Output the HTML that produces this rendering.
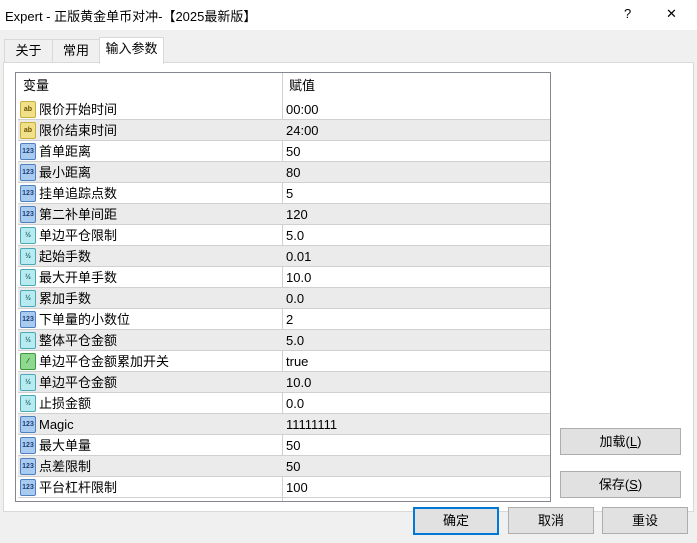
<!DOCTYPE html><html><head><meta charset="utf-8"><style>
body{margin:0;width:697px;height:543px;background:#f0f0f0;font-family:"Liberation Sans","Noto Sans CJK SC",sans-serif;font-size:13px;color:#000;position:relative;overflow:hidden}
.title{position:absolute;left:0;top:0;width:697px;height:30px;background:#fff}
.title span{position:absolute;left:5px;top:6px;font-size:13px}
.tb{position:absolute;top:4px;font-size:15px}
.tab{position:absolute;top:39px;height:23px;border:1px solid #d9d9d9;border-bottom:none;background:#f0f0f0;line-height:22px;text-align:center}
.panel{position:absolute;left:3px;top:62px;width:689px;height:448px;background:#fff;border:1px solid #d9d9d9}
.table{position:absolute;left:15px;top:72px;width:534px;height:428px;border:1px solid #828790;background:#fff;overflow:hidden}
.row{position:absolute;left:2px;width:532px;height:20px;border-bottom:1px solid #d0d0d0;line-height:21px}
.row.g{background:#ebebeb}
.c1{position:absolute;left:21px}
.c2{position:absolute;left:268px}
.ic{position:absolute;left:2px;top:2px;border-radius:2px;font-size:7px;line-height:15px;text-align:center;font-weight:bold;font-style:normal}
.ab{background:#f1e08a;border:1px solid #c8ae3c;color:#6a5000;width:14px;height:15px}
.n{background:#a9cbf0;border:1px solid #4f80bf;color:#1d3f7a;width:14px;height:15px}
.f{background:#b8ebf0;border:1px solid #4aa9b8;color:#1b6672;width:14px;height:15px}
.b{background:#8fd88f;border:1px solid #3c9a3c;color:#0a5a0a;width:14px;height:15px}
.vl{position:absolute;left:266px;top:0;width:1px;height:428px;background:#d0d0d0}
.btn{position:absolute;height:25px;background:#e1e1e1;border:1px solid #adadad;text-align:center;line-height:25px;font-size:13px}
</style></head><body>
<div class="title"><span>Expert - 正版黄金单币对冲-【2025最新版】</span><span class="tb" style="left:624px">?</span><span class="tb" style="left:666px">✕</span></div>
<div class="tab" style="left:4px;width:47px">关于</div>
<div class="tab" style="left:52px;width:46px">常用</div>
<div class="panel"></div>
<div class="tab" style="left:99px;top:37px;width:63px;height:26px;background:#fff;z-index:2">输入参数</div>
<div class="table">
<div class="vl"></div>
<div class="row" style="top:0;height:26px;line-height:26px;border:none"><span class="c1" style="left:5px">变量</span><span class="c2" style="left:271px">赋值</span></div>
<div class="row" style="top:26px"><i class="ic ab">ab</i><span class="c1">限价开始时间</span><span class="c2">00:00</span></div>
<div class="row g" style="top:47px"><i class="ic ab">ab</i><span class="c1">限价结束时间</span><span class="c2">24:00</span></div>
<div class="row" style="top:68px"><i class="ic n">123</i><span class="c1">首单距离</span><span class="c2">50</span></div>
<div class="row g" style="top:89px"><i class="ic n">123</i><span class="c1">最小距离</span><span class="c2">80</span></div>
<div class="row" style="top:110px"><i class="ic n">123</i><span class="c1">挂单追踪点数</span><span class="c2">5</span></div>
<div class="row g" style="top:131px"><i class="ic n">123</i><span class="c1">第二补单间距</span><span class="c2">120</span></div>
<div class="row" style="top:152px"><i class="ic f">½</i><span class="c1">单边平仓限制</span><span class="c2">5.0</span></div>
<div class="row g" style="top:173px"><i class="ic f">½</i><span class="c1">起始手数</span><span class="c2">0.01</span></div>
<div class="row" style="top:194px"><i class="ic f">½</i><span class="c1">最大开单手数</span><span class="c2">10.0</span></div>
<div class="row g" style="top:215px"><i class="ic f">½</i><span class="c1">累加手数</span><span class="c2">0.0</span></div>
<div class="row" style="top:236px"><i class="ic n">123</i><span class="c1">下单量的小数位</span><span class="c2">2</span></div>
<div class="row g" style="top:257px"><i class="ic f">½</i><span class="c1">整体平仓金额</span><span class="c2">5.0</span></div>
<div class="row" style="top:278px"><i class="ic b">⁄</i><span class="c1">单边平仓金额累加开关</span><span class="c2">true</span></div>
<div class="row g" style="top:299px"><i class="ic f">½</i><span class="c1">单边平仓金额</span><span class="c2">10.0</span></div>
<div class="row" style="top:320px"><i class="ic f">½</i><span class="c1">止损金额</span><span class="c2">0.0</span></div>
<div class="row g" style="top:341px"><i class="ic n">123</i><span class="c1">Magic</span><span class="c2">11111111</span></div>
<div class="row" style="top:362px"><i class="ic n">123</i><span class="c1">最大单量</span><span class="c2">50</span></div>
<div class="row g" style="top:383px"><i class="ic n">123</i><span class="c1">点差限制</span><span class="c2">50</span></div>
<div class="row" style="top:404px"><i class="ic n">123</i><span class="c1">平台杠杆限制</span><span class="c2">100</span></div>
</div>
<div class="btn" style="left:560px;top:428px;width:119px">加载(<u>L</u>)</div>
<div class="btn" style="left:560px;top:471px;width:119px">保存(<u>S</u>)</div>
<div class="btn" style="left:413px;top:507px;width:82px;border:2px solid #0078d7;height:24px;line-height:24px">确定</div>
<div class="btn" style="left:508px;top:507px;width:84px">取消</div>
<div class="btn" style="left:602px;top:507px;width:84px">重设</div>
</body></html>
